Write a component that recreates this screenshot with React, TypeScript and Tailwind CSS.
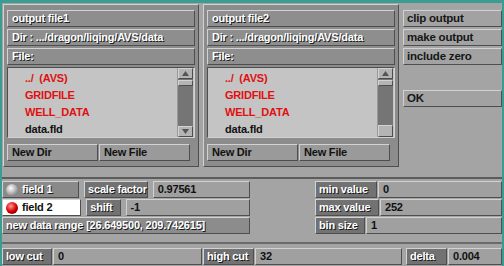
import React from "react";

const font = "font-['Liberation_Sans',Arial,sans-serif] font-bold text-[11px] tracking-[-0.2px] leading-none whitespace-nowrap";
const raised = "border border-t-[#d2d2d2] border-l-[#d2d2d2] border-b-[#4e4e4e] border-r-[#4e4e4e]";
const sunken = "border border-t-[#4e4e4e] border-l-[#4e4e4e] border-b-[#d2d2d2] border-r-[#d2d2d2]";
const shadowText = "text-white [text-shadow:1px_1px_0_#1a1a1a]";

function Bar({ children }: { children: React.ReactNode }) {
  return (
    <div className={`h-[17px] flex items-center pl-[4px] bg-[#8e8e8e] ${raised} ${shadowText}`}>
      {children}
    </div>
  );
}

function Arrow({ up }: { up?: boolean }) {
  return (
    <div className={`h-[11px] bg-[#b4b4b4] ${raised} flex items-center justify-center`}>
      <svg width="7" height="5" viewBox="0 0 7 5">
        <polygon points={up ? "3.5,0 7,5 0,5" : "0,0 7,0 3.5,5"} fill="#555" />
      </svg>
    </div>
  );
}

function FilePanel({ title, thumbBottom }: { title: string; thumbBottom?: boolean }) {
  const files = [
    { name: "../  (AVS)", red: true },
    { name: "GRIDFILE", red: true },
    { name: "WELL_DATA", red: true },
    { name: "data.fld", red: false },
  ];
  return (
    <div className={`w-[196px] h-[163px] bg-[#8c8c8c] ${raised} px-[3px] pt-[5px] flex flex-col gap-[2px]`}>
      <Bar>{title}</Bar>
      <Bar>Dir : .../dragon/liqing/AVS/data</Bar>
      <Bar>File:</Bar>
      <div className={`h-[71px] flex bg-[#c4c4c4] ${sunken}`}>
        <div className="flex-1 flex flex-col pl-[17px] pt-[5px] gap-[6px]">
          {files.map((f) => (
            <div key={f.name} className={`h-[11px] whitespace-pre ${f.red ? "text-[#e01010]" : "text-[#111]"}`}>
              {f.name}
            </div>
          ))}
        </div>
        <div className="w-[16px] mr-[1px] bg-[#757575] flex flex-col border-l border-[#9a9a9a]">
          <Arrow up />
          <div className={`h-[6px] mt-[1px] bg-[#b4b4b4] ${raised}`} />
          <div className="flex-1" />
          {thumbBottom ? (
            <div className={`h-[12px] bg-[#b4b4b4] ${raised}`} />
          ) : (
            <Arrow />
          )}
        </div>
      </div>
      <div className="flex mt-[4px] gap-[1px]">
        <div className={`w-[91px] h-[17px] flex items-center pl-[4px] bg-[#9a9a9a] ${raised} text-[#111]`}>New Dir</div>
        <div className={`w-[91px] h-[17px] flex items-center pl-[4px] bg-[#9a9a9a] ${raised} text-[#111]`}>New File</div>
      </div>
    </div>
  );
}

function SideButton({ children }: { children: React.ReactNode }) {
  return (
    <div className={`h-[17px] flex items-center pl-[3px] bg-[#a2a2a2] ${raised} text-[#161616] text-[11.5px]`}>
      {children}
    </div>
  );
}

function Label({ w, children }: { w: string; children: React.ReactNode }) {
  return (
    <div className={`${w} h-[17px] flex items-center pl-[3px] bg-[#727272] ${raised} ${shadowText}`}>
      {children}
    </div>
  );
}

function Value({ w, children }: { w: string; children: React.ReactNode }) {
  return (
    <div className={`${w} h-[17px] flex items-center pl-[4px] bg-[#a0a0a0] ${raised} text-[#111]`}>
      {children}
    </div>
  );
}

export default function App() {
  return (
    <div className={`w-[504px] h-[266px] bg-[#3b9c92] pt-[3px] px-[2px] overflow-hidden ${font}`}>
      <div className="h-[263px] bg-[#a4a4a4] flex flex-col">
        <div className="h-[176px] flex border-b-2 border-[#5c5c5c]">
          <div className="pl-[1px] pt-[1px]">
            <FilePanel title="output file1" />
          </div>
          <div className="pl-[4px] pt-[1px]">
            <FilePanel title="output file2" thumbBottom />
          </div>
          <div className="flex-1 pl-[4px] pt-[7px] flex flex-col gap-[2px]">
            <SideButton>clip output</SideButton>
            <SideButton>make output</SideButton>
            <SideButton>include zero</SideButton>
            <div className="h-[21px]" />
            <SideButton>OK</SideButton>
          </div>
        </div>
        <div className="flex pt-[2px] h-[60px]">
          <div className="w-[248px] flex flex-col gap-[1px]">
            <div className="flex gap-[5px]">
              <div className={`w-[99px] h-[17px] flex items-center gap-[4px] pl-[3px] bg-[#8a8a8a] ${raised} ${shadowText}`}>
                <span className="w-[12px] h-[12px] rounded-full bg-[radial-gradient(circle_at_40%_35%,#ffffff,#a8a8a8_55%,#5a5a5a)]" />
                field 1
              </div>
              <Label w="w-[73px]">scale factor</Label>
              <Value w="w-[125px]">0.97561</Value>
            </div>
            <div className="flex gap-[5px]">
              <div className={`w-[99px] h-[17px] flex items-center gap-[4px] pl-[3px] bg-white ${raised} text-[#111]`}>
                <span className="w-[12px] h-[12px] rounded-full bg-[radial-gradient(circle_at_40%_35%,#ff9a9a,#d80000_50%,#4a0000)]" />
                field 2
              </div>
              <Label w="w-[42px]">shift</Label>
              <Value w="w-[156px]">-1</Value>
            </div>
            <div className={`w-[248px] h-[17px] flex items-center pl-[3px] bg-[#8c8c8c] ${raised} ${shadowText}`}>
              new data range [26.649500, 209.742615]
            </div>
          </div>
          <div className="flex-1 pl-[65px] flex flex-col gap-[1px]">
            <div className="flex gap-[1px]">
              <Label w="w-[62px]">min value</Label>
              <Value w="flex-1">0</Value>
            </div>
            <div className="flex gap-[1px]">
              <Label w="w-[64px]">max value</Label>
              <Value w="flex-1">252</Value>
            </div>
            <div className="flex gap-[1px]">
              <Label w="w-[50px]">bin size</Label>
              <Value w="flex-1">1</Value>
            </div>
          </div>
        </div>
        <div className="mt-[3px] border-t-2 border-[#6a6a6a] pt-[4px] flex gap-[1px]">
          <Label w="w-[50px]">low cut</Label>
          <Value w="w-[149px]">0</Value>
          <Label w="w-[51px]">high cut</Label>
          <Value w="w-[147px]">32</Value>
          <div className="w-[2px]" />
          <Label w="w-[41px]">delta</Label>
          <Value w="flex-1">0.004</Value>
        </div>
      </div>
    </div>
  );
}
